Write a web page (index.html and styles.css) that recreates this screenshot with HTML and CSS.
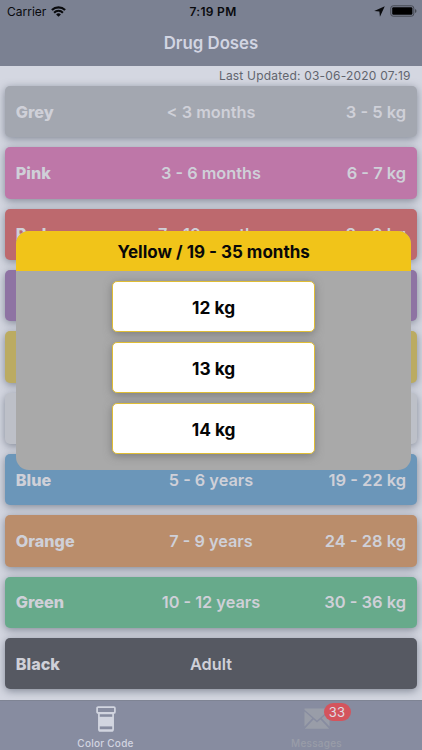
FILE: index.html
```
<!DOCTYPE html>
<html lang="en">
<head>
  <meta charset="UTF-8" />
  <meta name="viewport" content="width=device-width, initial-scale=1.0" />
  <title>Drug Doses</title>
  <link rel="stylesheet" href="styles.css">
</head>
<body>
  <div class="app">
    <!-- Status bar + title -->
    <header class="navbar">
      <div class="status">
        <div class="carrier">
          <span>Carrier</span>
          <svg width="15" height="11" viewBox="0 0 15 11" fill="none" stroke="#090a0d">
            <path d="M.9 4.1 A9.3 9.3 0 0 1 14.1 4.1" stroke-width="2.2" />
            <path d="M3.1 6.7 A6 6 0 0 1 11.9 6.7" stroke-width="2" />
            <path d="M7.5 10.8 L5.1 8.500 A3.3 3.3 0 0 1 9.9 8.500 Z" fill="#090a0d" stroke="none" />
          </svg>
        </div>
        <div class="time">7:19 PM</div>
        <div class="power">
          <svg width="11" height="11" viewBox="0 0 10 10"><path d="M9.8 .2 L5.4 9.8 L4.9 5.1 L.2 4.6 Z" fill="#090a0d" /></svg>
          <svg width="27" height="12" viewBox="0 0 27 12">
            <rect x=".8" y=".8" width="23" height="10.4" rx="2.4" fill="none" stroke="#454952" />
            <rect x="2.2" y="2.2" width="20.2" height="7.6" rx="1.2" fill="#000" />
            <path d="M25 4 Q26.5 4.5 26.5 6 Q26.5 7.5 25 8 Z" fill="#454952" />
          </svg>
        </div>
      </div>
      <h1>Drug Doses</h1>
    </header>

    <main>
      <p class="updated">Last Updated: 03-06-2020 07:19</p>
      <div class="list">
        <div class="row grey"><b>Grey</b><span>&lt; 3 months</span><span>3 - 5 kg</span></div>
        <div class="row pink"><b>Pink</b><span>3 - 6 months</span><span>6 - 7 kg</span></div>
        <div class="row red"><b>Red</b><span>7 - 10 months</span><span>8 - 9 kg</span></div>
        <div class="row purple"></div>
        <div class="row yellow"></div>
        <div class="row white"></div>
        <div class="row blue"><b>Blue</b><span>5 - 6 years</span><span>19 - 22 kg</span></div>
        <div class="row orange"><b>Orange</b><span>7 - 9 years</span><span>24 - 28 kg</span></div>
        <div class="row green"><b>Green</b><span>10 - 12 years</span><span>30 - 36 kg</span></div>
        <div class="row black"><b>Black</b><span>Adult</span><span></span></div>
      </div>
    </main>

    <!-- Bottom tabs -->
    <nav class="tabs">
      <div class="tab active">
        <svg width="20" height="26" viewBox="0 0 20 26" fill="none" stroke="#d2d5e0" stroke-width="1.7">
          <rect x="1.1" y="1.1" width="17.8" height="5.8" rx="1" />
          <path d="M2.9 7 V23.2 Q2.9 24.900 4.5 24.900 H15.500 Q17.100 24.900 17.100 23.200 V7" />
          <path d="M3 7.4 H17" />
          <rect x="3" y="10.8" width="14" height="9.6" fill="#d2d5e0" stroke="none" />
          <path d="M3 24.100 H17" />
        </svg>
        <span>Color Code</span>
      </div>
      <div class="tab">
        <div class="mail">
          <svg width="26" height="22" viewBox="0 0 26 22">
            <path d="M.5 .5 H25.5 V1.8 L13 12.5 L.5 1.8 Z" fill="#999da8" />
            <path d="M.5 3.5 L8.300 10.300 L.5 18.5 Z M25.5 3.5 L17.700 10.300 L25.5 18.5 Z" fill="#999da8" />
            <path d="M.8 20.8 L9.500 11.500 L13 14.500 L16.500 11.500 L25.200 20.8 Z" fill="#999da8" />
          </svg>
          <i class="badge">33</i>
        </div>
        <span>Messages</span>
      </div>
    </nav>

    <!-- Weight picker -->
    <div class="modal">
      <h2>Yellow / 19 - 35 months</h2>
      <div class="choices">
        <button>12 kg</button>
        <button>13 kg</button>
        <button>14 kg</button>
      </div>
    </div>
  </div>
</body>
</html>
```
FILE: styles.css
```
* { box-sizing: border-box; }
body { margin: 0; font-family: Inter, "Liberation Sans", sans-serif; }
h1, h2, p { margin: 0; }
.app { position: relative; width: 422px; height: 750px; display: flex; flex-direction: column; overflow: hidden; background: #d4d7e1; }

.navbar { height: 65.5px; background: #7b8192; }
.status { display: grid; grid-template-columns: 1fr auto 1fr; align-items: center; height: 22px; padding: 0 5px 0 7px; font-size: 12px; color: #090a0d; }
.status svg { display: block; }
.carrier, .power { display: flex; align-items: center; }
.carrier { gap: 5px; }
.time { padding-left: 2px; font-weight: 600; letter-spacing: 0.3px; }
.power { justify-content: flex-end; gap: 5px; }
.navbar h1 { font-size: 16.8px; line-height: 42px; font-weight: 600; text-align: center; color: #d2d5e2; }

main { flex: 1; padding: 0 5.3px; }
.updated { height: 20.5px; padding-right: 6px; font-size: 12px; line-height: 20px; letter-spacing: 0.2px; text-align: right; color: #62656e; }
.list { display: grid; gap: 10px; }
.row { display: grid; grid-template-columns: 1fr 1.4fr 1fr; align-items: center; height: 51.33px; padding: 0 10.5px; border-radius: 5px; box-shadow: 0 2px 9px rgba(60, 70, 85, 0.55); font-size: 16.3px; font-weight: 600; color: #cfd0d8; }
.row b { font-size: 16.2px; font-weight: 800; }
.row span { text-align: center; }
.row span:last-child { font-size: 16.5px; text-align: right; }
.grey { background: #a3a7b0; }
.pink { background: #be77a8; }
.red { background: #bd696e; }
.purple { background: #8e73a3; }
.yellow { background: #bbab62; }
.white { background: #bdc0c8; }
.blue { background: #6b96b9; }
.orange { background: #ba8d6b; }
.green { background: #67aa8b; }
.black { background: #565962; }

.tabs { display: flex; height: 50.5px; background: #878ca0; border-top: 1px solid #7f8494; }
.tab { flex: 1; display: flex; flex-direction: column; align-items: center; justify-content: space-between; padding: 5px 0 1px; font-size: 10px; line-height: 12px; font-weight: 500; letter-spacing: 0.25px; color: #999da8; }
.tab svg { display: block; }
.active { color: #d2d5e0; }
.mail { position: relative; padding-top: 2px; }
.badge { position: absolute; left: 20px; top: -3px; width: 27px; height: 18px; border-radius: 9px; background: #d4545d; font-size: 13px; line-height: 18px; font-style: normal; font-weight: 400; text-align: center; color: #dfdce3; }

/* sits over the dimmed list */
.modal { position: absolute; left: 15.8px; right: 10.6px; top: 230.5px; height: 239.3px; border-radius: 13px; overflow: hidden; background: #a9a9a9; }
.modal h2 { height: 40.5px; font-size: 17px; line-height: 42px; font-weight: 700; text-align: center; background: #f1c419; color: #090909; }
.choices { display: flex; flex-direction: column; align-items: center; gap: 10px; padding-top: 10.2px; }
.choices button { width: 203.5px; height: 51px; padding: 2px 0 0; border: 1.5px solid #dfbd35; border-radius: 5px; background: #fff; box-shadow: 0 2px 8px rgba(80, 80, 80, 0.5); font: 700 17.3px Inter, "Liberation Sans", sans-serif; color: #050505; }
```
